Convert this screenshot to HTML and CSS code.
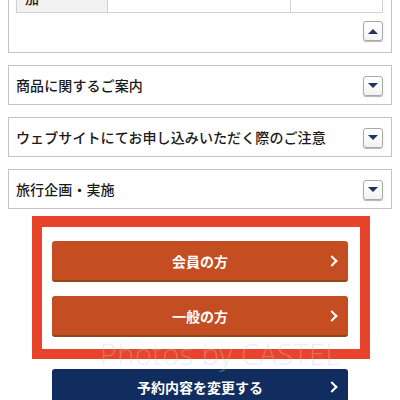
FILE: index.html
```html
<!DOCTYPE html>
<html lang="ja">
<head>
<meta charset="utf-8">
<link rel="stylesheet" href="styles.css">
</head>
<body>
<div class="page">
  <div class="box box-open">
    <table class="info">
      <tr>
        <td class="th">加</td>
        <td class="td-mid"></td>
        <td class="td-end"></td>
      </tr>
    </table>
    <div class="box-foot">
      <span class="tbtn"><span class="tri tri-up"></span></span>
    </div>
  </div>

  <div class="box acc">
    <span class="acc-title">商品に関するご案内</span>
    <span class="tbtn"><span class="tri tri-down"></span></span>
  </div>
  <div class="box acc">
    <span class="acc-title">ウェブサイトにてお申し込みいただく際のご注意</span>
    <span class="tbtn"><span class="tri tri-down"></span></span>
  </div>
  <div class="box acc">
    <span class="acc-title">旅行企画・実施</span>
    <span class="tbtn"><span class="tri tri-down"></span></span>
  </div>

  <div class="frame">
    <a class="btn btn-orange">会員の方<span class="chev"></span></a>
    <a class="btn btn-orange">一般の方<span class="chev"></span></a>
  </div>

  <a class="btn btn-navy">予約内容を変更する<span class="chev"></span></a>
</div>
<div class="watermark">Photos by CASTEL</div>
</body>
</html>
```

FILE: styles.css
```css
html, body {
  margin: 0;
  padding: 0;
  background: #ffffff;
  overflow: hidden;
}
body {
  width: 400px;
  height: 400px;
  position: relative;
  font-family: "Noto Sans CJK JP", "Noto Sans", sans-serif;
  color: #222222;
}
.page {
  padding: 0 8px;
  display: flex;
  flex-direction: column;
}
.box {
  border: 1px solid #c4c4c4;
  background: #fff;
  box-sizing: border-box;
}
.box-open {
  margin-top: -30px;
  padding: 7px 8px 11px 7px;
}
.info {
  width: 100%;
  border-collapse: collapse;
  font-size: 14px;
}
.info td {
  border: 1px solid #d0d0d0;
  height: 34px;
  padding: 0 0 0 8px;
  box-sizing: border-box;
  vertical-align: middle;
}
.info .th {
  width: 91px;
  background: #f1f1f1;
  font-weight: 500;
  padding-top: 4px;
}
.info .td-end {
  width: 92px;
}
.box-foot {
  display: flex;
  justify-content: flex-end;
  padding-top: 7px;
}
.acc {
  margin-top: 12px;
  height: 40px;
  display: flex;
  align-items: center;
  justify-content: space-between;
  padding: 0 8px 0 7px;
}
.acc-title {
  font-size: 14px;
  font-weight: 500;
  letter-spacing: 0.1px;
  color: #1a1a1a;
}
.tbtn {
  width: 20px;
  height: 20px;
  box-sizing: border-box;
  border: 1px solid #a9a9a9;
  border-radius: 3px;
  background: linear-gradient(#ffffff, #f3f3f3);
  box-shadow: 0 1px 1px rgba(0, 0, 0, 0.3);
  display: flex;
  align-items: center;
  justify-content: center;
  margin-top: 1px;
}
.tri {
  width: 0;
  height: 0;
  border-left: 5px solid transparent;
  border-right: 5px solid transparent;
}
.tri-down {
  border-top: 5px solid #1b3566;
}
.tri-up {
  border-bottom: 5px solid #1b3566;
}
.frame {
  margin: 7px 22px 0 24px;
  border: 10px solid #e8432b;
  border-top-width: 11px;
  padding: 14px 12px 12px 10px;
  display: flex;
  flex-direction: column;
  gap: 14px;
}
.btn {
  position: relative;
  display: flex;
  align-items: center;
  justify-content: center;
  height: 41px;
  box-sizing: border-box;
  border-radius: 3px;
  color: #ffffff;
  font-size: 14px;
  font-weight: 700;
  text-decoration: none;
}
.btn-orange {
  background: #c44e21;
  border-bottom: 2px solid #8c4a17;
  padding-top: 1px;
}
.btn-navy {
  margin: 10px 44px 0 44px;
  background: #112d5f;
  padding-bottom: 6px;
}
.chev {
  position: absolute;
  right: 12px;
  top: 50%;
  width: 6px;
  height: 6px;
  border-top: 2.5px solid #ffffff;
  border-right: 2.5px solid #ffffff;
  transform: translateY(-50%) rotate(45deg);
}
.btn-navy .chev {
  margin-top: -3px;
}
.watermark {
  position: absolute;
  left: 100px;
  top: 334px;
  font-family: "Open Sans", "Liberation Sans", sans-serif;
  font-weight: 300;
  font-size: 29px;
  letter-spacing: 0.4px;
  color: rgba(205, 205, 205, 0.35);
  pointer-events: none;
  white-space: nowrap;
}
```
